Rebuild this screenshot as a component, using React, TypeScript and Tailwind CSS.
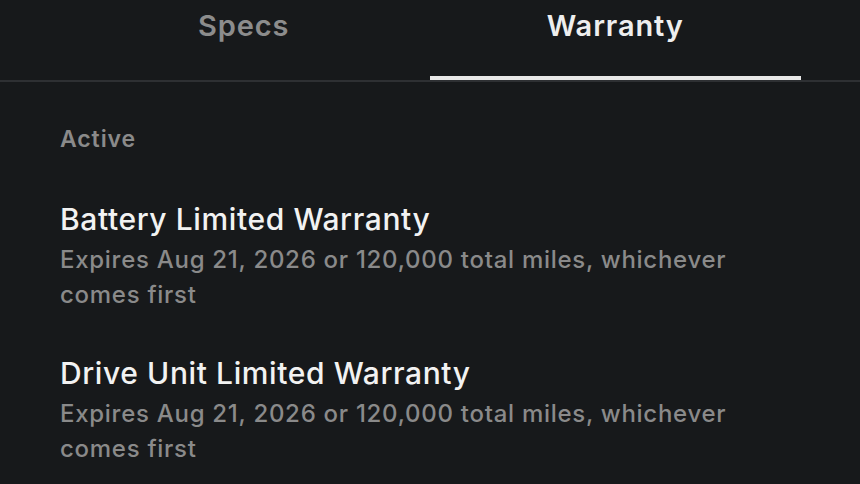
const tabs = ["Specs", "Warranty"];

const warranties = [
  {
    title: "Battery Limited Warranty",
    detail: "Expires Aug 21, 2026 or 120,000 total miles, whichever comes first",
  },
  {
    title: "Drive Unit Limited Warranty",
    detail: "Expires Aug 21, 2026 or 120,000 total miles, whichever comes first",
  },
];

export default function App() {
  const active = "Warranty";

  return (
    <div className="h-[484px] w-[860px] overflow-hidden bg-[#17191b] font-['Inter',sans-serif]">
      <div className="border-b-2 border-[#2e3033]">
        <div className="flex pl-[58px] pr-[59px]">
          {tabs.map((tab) => (
            <div key={tab} className="flex h-[80px] flex-1 flex-col items-center">
              <span
                className={
                  tab === active
                    ? "mt-[8px] text-[29px] font-semibold leading-[36px] tracking-[0.03em] text-[#eeeeee]"
                    : "mt-[8px] text-[29px] font-semibold leading-[36px] tracking-[0.03em] text-[#8c8c8c]"
                }
              >
                {tab}
              </span>
              {tab === active && <div className="mt-auto h-[4px] w-full bg-[#e8e8e8]" />}
            </div>
          ))}
        </div>
      </div>

      <div className="pl-[60px] pr-[60px] pt-[42px]">
        <p className="text-[23px] font-semibold leading-[30px] tracking-[0.04em] text-[#8a8a8a]">Active</p>
        <div className="mt-[47px] flex flex-col gap-[43px]">
          {warranties.map((w) => (
            <div key={w.title}>
              <h3 className="text-[30px] font-medium leading-[36px] tracking-[0.02em] text-[#f2f2f2]">{w.title}</h3>
              <p className="mt-[5px] max-w-[700px] text-[24px] font-medium leading-[35px] tracking-[0.03em] text-[#8a8a8a]">
                {w.detail}
              </p>
            </div>
          ))}
        </div>
      </div>
    </div>
  );
}
